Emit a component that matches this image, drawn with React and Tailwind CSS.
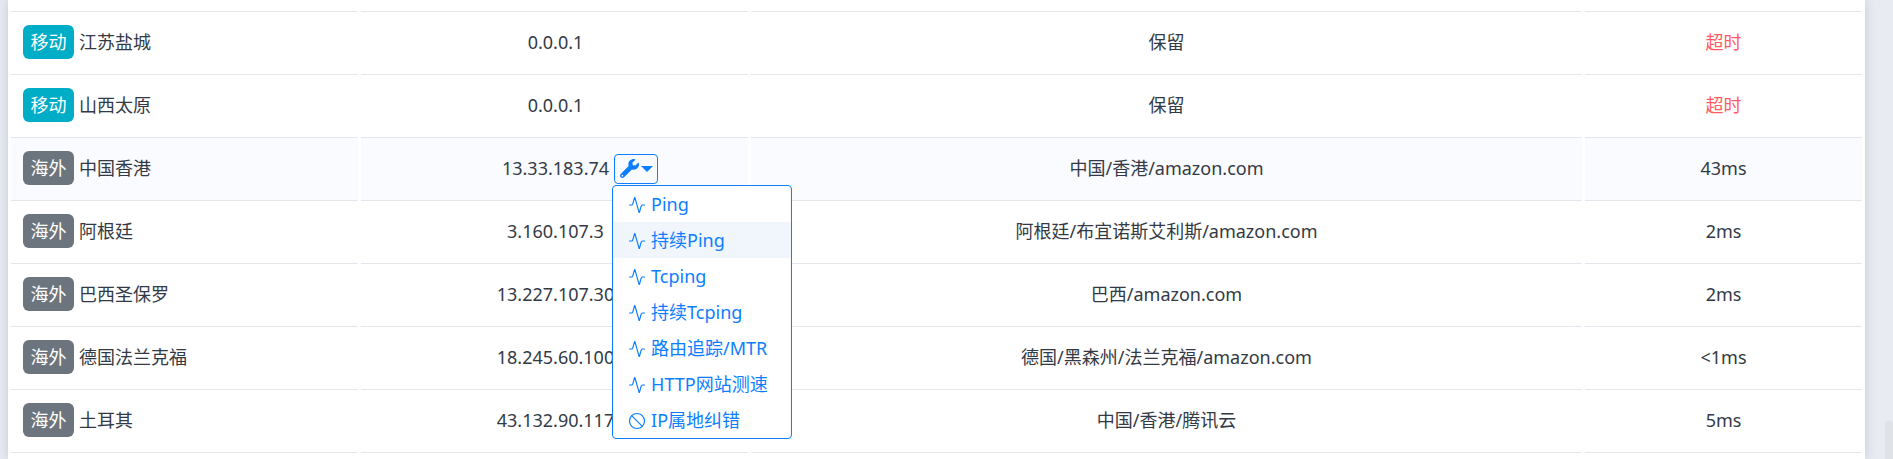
import React from "react";
import { FaWrench } from "react-icons/fa";
import { Activity, Ban } from "lucide-react";

const rows = [
  ["移动", "江苏盐城", "0.0.0.1", "保留", "超时"],
  ["移动", "山西太原", "0.0.0.1", "保留", "超时"],
  ["海外", "中国香港", "13.33.183.74", "中国/香港/amazon.com", "43ms"],
  ["海外", "阿根廷", "3.160.107.3", "阿根廷/布宜诺斯艾利斯/amazon.com", "2ms"],
  ["海外", "巴西圣保罗", "13.227.107.30", "巴西/amazon.com", "2ms"],
  ["海外", "德国法兰克福", "18.245.60.100", "德国/黑森州/法兰克福/amazon.com", "<1ms"],
  ["海外", "土耳其", "43.132.90.117", "中国/香港/腾讯云", "5ms"],
];

const menu = ["Ping", "持续Ping", "Tcping", "持续Tcping", "路由追踪/MTR", "HTTP网站测速", "IP属地纠错"];

function Menu() {
  return (
    <div className="absolute left-[5px] top-[30px] z-10 w-[180px] rounded-[4px] border border-[#0d7eff] bg-white text-left">
      {menu.map((m, i) => (
        <div
          key={m}
          className={"flex h-[36px] items-center whitespace-nowrap pl-[15px] pt-[2px] text-[#0d7eff] " + (i === 1 ? "bg-[#f0f6fc]" : "")}
        >
          {i === 6 ? (
            <Ban size={18} strokeWidth={1.6} className="shrink-0" />
          ) : (
            <Activity size={18} strokeWidth={1.6} className="shrink-0" />
          )}
          <span className="ml-[5px]">{m}</span>
        </div>
      ))}
    </div>
  );
}

function Row({ r, i }) {
  const active = i === 2;
  const cell =
    "flex h-[63px] items-center border-t border-[#e3e7ed] pb-[2px] " + (active ? "bg-[#fafbff]" : "bg-white");
  return (
    <div className="grid grid-cols-[347px_387px_831px_277px] gap-x-[3px]">
      <div className={cell + " pl-[12px]"}>
        <span
          className={
            "flex h-[34px] w-[51px] items-center justify-center rounded-[6px] text-white " +
            (r[0] === "移动" ? "bg-[#00adc7]" : "bg-[#6c757d]")
          }
        >
          {r[0]}
        </span>
        <span className="ml-[5px]">{r[1]}</span>
      </div>
      <div className={cell + " justify-center pl-[2px]"}>
        <span className="relative">
          {r[2]}
          {active && (
            <>
              <span className="absolute left-[calc(100%+5px)] top-[-1px] flex h-[30px] w-[44px] items-center justify-center gap-[2px] rounded-[4px] border border-[#0d7eff] text-[#0d7eff]">
                <FaWrench size={19} />
                <span className="mt-[1px] h-0 w-0 border-x-[6px] border-t-[6px] border-x-transparent border-t-[#0d7eff]" />
              </span>
              <span className="absolute left-[calc(100%-2px)] top-0 h-0 w-0">
                <Menu />
              </span>
            </>
          )}
        </span>
      </div>
      <div className={cell + " justify-center"}>{r[3]}</div>
      <div className={cell + " justify-center " + (r[4] === "超时" ? "text-[#ff5c66]" : "")}>{r[4]}</div>
    </div>
  );
}

export default function App() {
  return (
    <div className="relative h-[459px] w-[1893px] overflow-hidden bg-[#e8ebf1] text-[18px] leading-[27px] text-[#333a45] [font-family:'Noto_Sans','Noto_Sans_CJK_SC',sans-serif]">
      <div className="ml-[8px] h-[459px] w-[1857px] bg-white pl-[3px] pt-[11px] shadow-[0_0_10px_rgba(150,160,180,0.45)]">
        {rows.map((r, i) => (
          <Row key={i} r={r} i={i} />
        ))}
        <div className="grid grid-cols-[347px_387px_831px_277px] gap-x-[3px]">
          {[0, 1, 2, 3].map((k) => (
            <div key={k} className="h-[7px] border-t border-[#e3e7ed]" />
          ))}
        </div>
      </div>
      <div className="absolute bottom-0 right-0 h-[38px] w-[8px] rounded-t-[3px] bg-[#dfe2e7]" />
    </div>
  );
}
